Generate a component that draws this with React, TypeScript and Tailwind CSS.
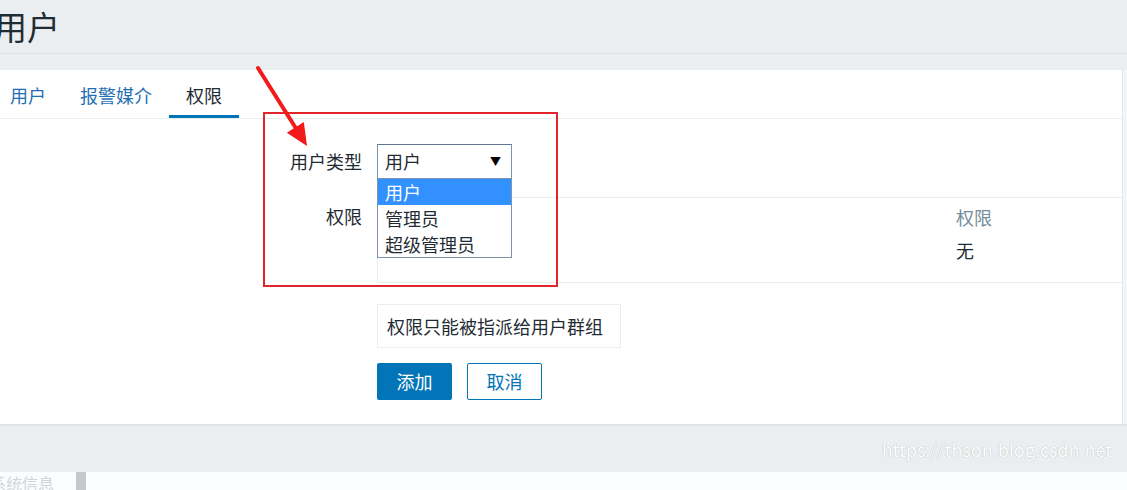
import React from "react";

const font = "font-['Noto_Sans_CJK_SC','Noto_Sans',sans-serif]";

function Tabs() {
  const tabs = [
    { name: "用户", active: false },
    { name: "报警媒介", active: false },
    { name: "权限", active: true },
  ];
  return (
    <div className="flex h-[49px] border-b border-[#ebeef0] pl-0 ml-[-7px]">
      {tabs.map((t) => (
        <div
          key={t.name}
          className={
            t.active
              ? "flex items-center px-[17px] pt-[6px] border-b-[3px] border-[#0275b8] text-[#1f2c33]"
              : "flex items-center px-[17px] pt-[6px] border-b-[3px] border-transparent text-[#1f6fb3]"
          }
        >
          {t.name}
        </div>
      ))}
    </div>
  );
}

function UserTypeSelect() {
  return (
    <div className="relative w-[135px]">
      <div className="flex h-[35px] items-center justify-between border border-[#7b93ad] border-t-[#5f7890] bg-white pl-[7px] pr-[10px] text-[#1f2c33]">
        <span>用户</span>
        <span className="text-[11px] text-black">▼</span>
      </div>
      {/* open option list */}
      <div className="absolute left-0 top-full z-10 w-[135px] border border-[#7f94aa] border-t-0 bg-white text-[#1f2c33]">
        <div className="h-[26px] bg-[#3390ff] pl-[7px] leading-[26px] text-white">用户</div>
        <div className="h-[26px] pl-[7px] leading-[26px]">管理员</div>
        <div className="h-[26px] pl-[7px] leading-[26px]">超级管理员</div>
      </div>
    </div>
  );
}

function PermissionForm() {
  return (
    <div className="pt-[25px] pb-[24px]">
      {/* user type */}
      <div className="flex h-[35px] items-center">
        <div className="w-[377px] pr-[15px] text-right text-[#1f2c33]">用户类型</div>
        <UserTypeSelect />
      </div>

      {/* permissions table (first column hidden behind the open list) */}
      <div className="mt-[18px] flex">
        <div className="w-[377px] pr-[15px] pt-[8px] text-right leading-[22px] text-[#1f2c33]">
          权限
        </div>
        <div className="flex-1 border-y border-l border-[#ebeef0] px-[10px]">
          <div className="grid h-[40px] grid-cols-[568px_1fr] pt-[8px] leading-[22px] text-[#768d99]">
            <div />
            <div>权限</div>
          </div>
          <div className="grid h-[44px] grid-cols-[568px_1fr] pt-[1px] leading-[22px] text-[#1f2c33]">
            <div />
            <div>无</div>
          </div>
        </div>
      </div>

      {/* hint */}
      <div className="mt-[21px] flex">
        <div className="w-[377px]" />
        <div className="flex h-[44px] w-[244px] items-center border border-[#ebeef0] px-[9px] text-[#1f2c33]">
          权限只能被指派给用户群组
        </div>
      </div>

      {/* buttons */}
      <div className="mt-[15px] flex">
        <div className="w-[377px]" />
        <div className="flex gap-[15px]">
          <button className="h-[37px] w-[75px] rounded-[2px] bg-[#0275b8] text-white">添加</button>
          <button className="h-[37px] w-[75px] rounded-[2px] border border-[#0275b8] bg-white text-[#0275b8]">
            取消
          </button>
        </div>
      </div>
    </div>
  );
}

function Annotation() {
  return (
    <>
      <div className="pointer-events-none absolute left-[263px] top-[112px] z-20 h-[175px] w-[295px] border-2 border-[#e3262c]" />
      <svg
        className="pointer-events-none absolute left-0 top-0 z-20"
        width="400"
        height="200"
        viewBox="0 0 400 200"
      >
        <line x1="258" y1="68" x2="297" y2="130" stroke="#f21a1a" strokeWidth="4" strokeLinecap="round" />
        <polygon points="307,146 286.8,132.7 303.8,122.1" fill="#f21a1a" />
      </svg>
    </>
  );
}

export default function App() {
  return (
    <div className={`relative h-[490px] w-[1127px] overflow-hidden bg-[#ebeef0] text-[18px] ${font}`}>
      {/* page title */}
      <div className="flex h-[54px] items-center border-b border-[#dde2e5] pr-[5px]">
        <h1 className="ml-[-6px] text-[33px] leading-none text-[#1f2c33]">用户</h1>
      </div>

      {/* white form panel */}
      <div className="mt-[16px] flex">
        <div className="h-[354px] w-[1122px] bg-white">
          <Tabs />
          <PermissionForm />
        </div>
        <div className="flex-1 border-l border-[#e4e7e9] bg-[#f4f5f6]" />
      </div>

      {/* footer band */}
      <div className="flex h-[48px] items-center justify-end border-t-2 border-[#e2e5e7] pr-[15px]">
        <span className="text-[18px] text-white [text-shadow:0_0_1px_#9aa3a8]">
          https://thson.blog.csdn.net
        </span>
      </div>

      {/* cut-off bottom strip */}
      <div className="flex h-[18px] items-start bg-[#fbfcfd]">
        <span className="ml-[-10px] w-[86px] text-[16px] leading-[22px] text-[#d2d5d8]">系统信息</span>
        <div className="h-full w-[10px] bg-[#c6c8ca]" />
      </div>

      <Annotation />
    </div>
  );
}
